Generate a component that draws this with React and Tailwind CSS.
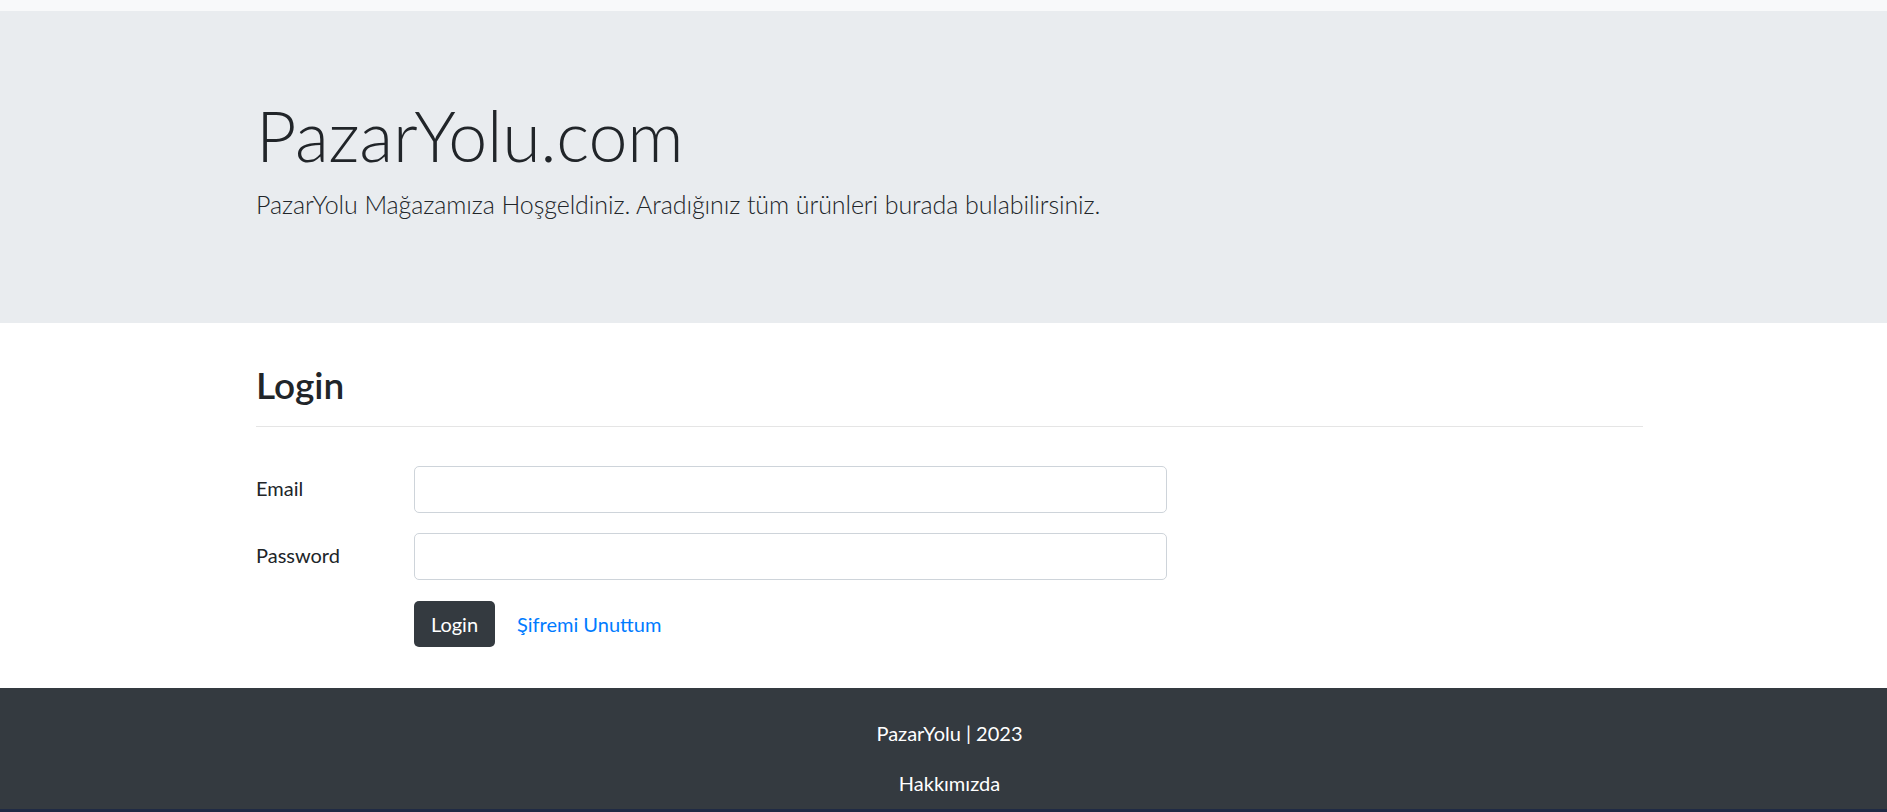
export default function App() {
  return (
    <div className="min-h-[812px] flex flex-col bg-white text-[#212529]" style={{ fontFamily: "Lato, 'Open Sans', sans-serif" }}>
      <div className="h-[11px] bg-[#f8f9fa]" />

      <section className="h-[312px] bg-[#e9ecef] pt-[82px]">
        <div className="w-[1387px] ml-[256px]">
          <h1 className="text-[70px] font-light leading-[84px] tracking-[-0.3px]">PazarYolu.com</h1>
          <p className="mt-[12px] text-[25px] font-light leading-[30px] tracking-[-0.09px]">
            PazarYolu Mağazamıza Hoşgeldiniz. Aradığınız tüm ürünleri burada bulabilirsiniz.
          </p>
        </div>
      </section>

      <main className="h-[365px] pt-[40px]">
        <div className="w-[1387px] ml-[256px]">
          <h3 className="text-[37px] font-semibold leading-[44px]">Login</h3>
          <hr className="mt-[19px] border-0 border-t border-black/10" />
          <form className="mt-[39px] flex flex-col gap-[20px] text-[20px]">
            <div className="flex">
              <label className="w-[158px] pt-[7px] leading-[30px]">Email</label>
              <input type="email" className="w-[753px] h-[47px] border border-[#ced4da] rounded-[5px] px-[15px] outline-none bg-white" />
            </div>
            <div className="flex">
              <label className="w-[158px] pt-[7px] leading-[30px]">Password</label>
              <input type="password" className="w-[753px] h-[47px] border border-[#ced4da] rounded-[5px] px-[15px] outline-none bg-white" />
            </div>
            <div className="flex items-center pl-[158px] mt-[1px]">
              <button type="button" className="w-[81px] h-[46px] rounded-[5px] bg-[#343a40] text-white text-[20px] leading-[30px]">
                Login
              </button>
              <a href="#" className="ml-[22px] text-[#007bff] leading-[30px]">Şifremi Unuttum</a>
            </div>
          </form>
        </div>
      </main>

      <footer className="h-[121px] bg-[#343a40] text-white text-[20px] leading-[30px] pt-[30px]">
        <div className="w-[1387px] ml-[256px] flex flex-col items-center gap-[20px]">
          <p>PazarYolu | 2023</p>
          <p>Hakkımızda</p>
        </div>
      </footer>
      <div className="h-[3px] bg-[#1f2a44]" />
    </div>
  );
}
